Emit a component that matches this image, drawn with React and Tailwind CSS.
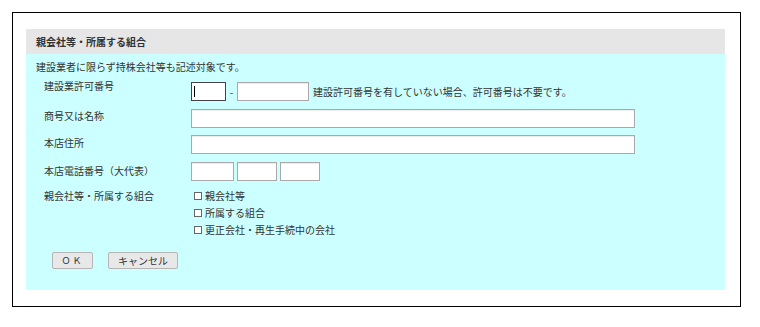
import React from "react";

const font = { fontFamily: '"Noto Sans CJK JP", "Noto Sans", sans-serif' };

function Input({ className = "" }) {
  return (
    <div
      className={
        "h-[19px] bg-white border border-[#a9a9a9] shadow-[inset_0_1px_1px_rgba(0,0,0,0.08)] " +
        className
      }
    />
  );
}

function Check({ label }) {
  return (
    <div className="flex items-center h-[17px]">
      <div className="ml-[3px] w-[8px] h-[8px] border border-[#666] bg-white" />
      <span className="ml-[3px]">{label}</span>
    </div>
  );
}

export default function App() {
  return (
    <div
      className="w-[760px] h-[327px] bg-white pt-[12px] pl-[12px] text-[10px] leading-[14px] text-[#333]"
      style={font}
    >
      <div className="w-[729px] h-[295px] border border-black pt-[16px] pl-[13px]">
        <div className="w-[699px] h-[261px] flex flex-col">
          <div className="h-[25px] bg-[#e6e6e6] px-[10px] flex items-center font-bold text-[#333]">
            親会社等・所属する組合
          </div>
          <div className="flex-1 bg-[#ccffff] px-[10px] pt-[6px]">
            <div>建設業者に限らず持株会社等も記述対象です。</div>

            {/* Row 1 */}
            <div className="flex items-start mt-[5px]">
              <div className="w-[155px] pl-[8px]">建設業許可番号</div>
              <div className="flex items-center mt-[3px]">
                <div className="relative h-[19px] w-[35px] bg-white border border-[#444]">
                  <div className="absolute left-[2px] top-[3px] w-[1px] h-[11px] bg-black" />
                </div>
                <span className="w-[11px] text-center">-</span>
                <Input className="w-[72px]" />
                <span className="ml-[4px]">
                  建設許可番号を有していない場合、許可番号は不要です。
                </span>
              </div>
            </div>

            {/* Row 2 */}
            <div className="flex items-start mt-[8px]">
              <div className="w-[155px] pl-[8px] pt-[0px]">商号又は名称</div>
              <Input className="w-[444px]" />
            </div>

            {/* Row 3 */}
            <div className="flex items-start mt-[7px]">
              <div className="w-[155px] pl-[8px] pt-[1px]">本店住所</div>
              <Input className="w-[444px]" />
            </div>

            {/* Row 4 */}
            <div className="flex items-start mt-[8px]">
              <div className="w-[155px] pl-[8px] pt-[2px]">本店電話番号（大代表）</div>
              <div className="flex gap-[3px]">
                <Input className="w-[43px]" />
                <Input className="w-[40px]" />
                <Input className="w-[40px]" />
              </div>
            </div>

            {/* Row 5 */}
            <div className="flex items-start mt-[6px]">
              <div className="w-[155px] pl-[8px] pt-[2px]">親会社等・所属する組合</div>
              <div className="flex flex-col">
                <Check label="親会社等" />
                <Check label="所属する組合" />
                <Check label="更正会社・再生手続中の会社" />
              </div>
            </div>

            {/* Buttons */}
            <div className="flex mt-[14px] ml-[16px] gap-[15px]">
              <button className="w-[41px] h-[17px] bg-[#e8e8e8] border border-[#b5b5b5] rounded-[2px] text-[9px] leading-[15px] text-[#333] tracking-[2px]">
                ＯＫ
              </button>
              <button className="w-[70px] h-[17px] bg-[#e8e8e8] border border-[#b5b5b5] rounded-[2px] text-[10px] leading-[15px] text-[#333]">
                キャンセル
              </button>
            </div>
          </div>
        </div>
      </div>
    </div>
  );
}
